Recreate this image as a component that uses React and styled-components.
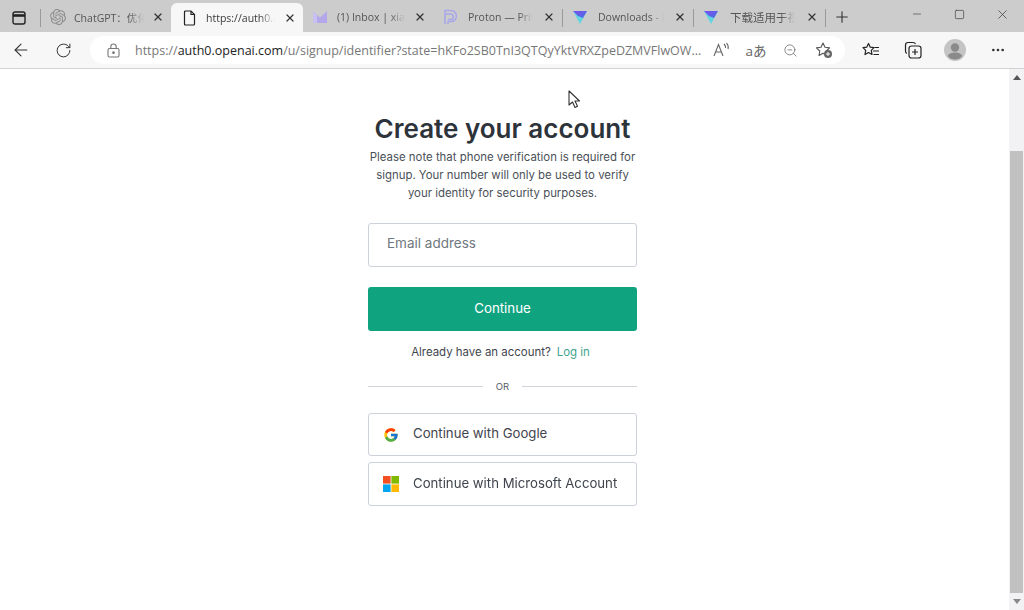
import React from 'react';
import styled, { createGlobalStyle } from 'styled-components';
import { ArrowLeft, RotateCw, ZoomOut, Plus, X, Minus, Square, MoreHorizontal } from 'lucide-react';
import { SiOpenai } from 'react-icons/si';
import { FcGoogle } from 'react-icons/fc';

const GlobalStyle = createGlobalStyle`
  html, body { margin: 0; padding: 0; background: #fff; overflow: hidden; }
  body { font-family: "Inter", "Liberation Sans", sans-serif; }
`;

const Shell = styled.div`
  position: relative;
  width: 1024px;
  height: 610px;
  display: flex;
  flex-direction: column;
  overflow: hidden;
  filter: blur(0.4px);
`;

const TabStrip = styled.div`
  height: 32px;
  background: #cccccc;
  display: flex;
  align-items: flex-end;
  flex-shrink: 0;
`;

const SidebarButton = styled.div`
  width: 40px;
  height: 32px;
  display: flex;
  align-items: center;
  justify-content: center;
  padding: 3px 3px 0 0;
  box-sizing: border-box;
  flex-shrink: 0;
`;

const Divider = styled.div`
  width: 1px;
  height: 18px;
  margin-bottom: 5px;
  background: #9a9a9a;
  flex-shrink: 0;
`;

const Tab = styled.div`
  width: ${p => p.$w}px;
  height: ${p => (p.$active ? 29 : 32)}px;
  flex-shrink: 0;
  display: flex;
  align-items: center;
  gap: ${p => p.$gap || 9}px;
  padding: ${p => (p.$active ? 0 : 2)}px 7px 0 ${p => p.$pad || 9}px;
  box-sizing: border-box;
  border-radius: 6px 6px 0 0;
  background: ${p => (p.$active ? '#f7f7f7' : 'transparent')};
`;

const TabTitle = styled.span`
  flex: 1;
  min-width: 0;
  white-space: nowrap;
  font-family: "Open Sans", "Noto Sans CJK SC", sans-serif;
  font-size: ${p => p.$size || 10.5}px;
  color: ${p => (p.$active ? '#3a3a3a' : '#555')};
  mask-image: linear-gradient(to right, #000 78%, transparent 100%);
  -webkit-mask-image: linear-gradient(to right, #000 78%, transparent 100%);
`;

const TabIcon = styled.span`
  width: 16px;
  height: 16px;
  display: flex;
  align-items: center;
  justify-content: center;
  flex-shrink: 0;
`;

const NewTab = styled.div`
  width: 31px;
  height: 32px;
  padding-top: 2px;
  box-sizing: border-box;
  display: flex;
  align-items: center;
  justify-content: center;
  flex-shrink: 0;
`;

const WindowButtons = styled.div`
  margin-left: auto;
  display: flex;
  align-items: flex-start;
  height: 32px;
`;

const WindowButton = styled.div`
  width: 43px;
  height: 28px;
  display: flex;
  align-items: center;
  justify-content: center;
`;

const Toolbar = styled.div`
  height: 37px;
  box-sizing: border-box;
  background: #f7f7f7;
  border-bottom: 1px solid #d2d2d2;
  display: flex;
  align-items: center;
  flex-shrink: 0;
`;

const ToolButton = styled.div`
  width: ${p => p.$w || 42}px;
  height: 30px;
  display: flex;
  align-items: center;
  justify-content: center;
  flex-shrink: 0;
`;

const AddressBar = styled.div`
  width: 755px;
  height: 28px;
  margin-left: 6px;
  border-radius: 14px;
  background: #fff;
  display: flex;
  align-items: center;
  padding-left: 17px;
  box-sizing: border-box;
  flex-shrink: 0;

  > svg {
    flex-shrink: 0;
  }
`;

const Url = styled.div`
  width: 566px;
  margin-left: 15px;
  overflow: hidden;
  white-space: nowrap;
  font-family: "Open Sans", sans-serif;
  font-size: 12.5px;
  color: #777;
  flex-shrink: 0;

  strong {
    font-weight: 400;
    color: #222;
  }
`;

const AddressActions = styled.div`
  display: flex;
  align-items: center;
  margin-left: 4px;
`;

const AddressAction = styled.div`
  width: 34px;
  height: 24px;
  display: flex;
  align-items: center;
  justify-content: center;
  font-family: "Open Sans", "Noto Sans CJK JP", sans-serif;
  font-size: 13.5px;
  color: #666;
`;

const ToolGroup = styled.div`
  display: flex;
  align-items: center;
  margin-left: 5px;
`;

const Page = styled.div`
  flex: 1;
  display: flex;
  min-height: 0;
`;

const Main = styled.main`
  flex: 1;
  background: #fff;
  display: flex;
  justify-content: flex-start;
  padding: 44px 0 0 368px;
  box-sizing: border-box;
`;

const Form = styled.div`
  width: 269px;
  display: flex;
  flex-direction: column;
  align-items: stretch;
`;

const Title = styled.h1`
  margin: 0;
  font-size: 26px;
  line-height: 32px;
  font-weight: 600;
  color: #2d333a;
  text-align: center;
  white-space: nowrap;
`;

const Note = styled.p`
  margin: 3px 0 0;
  font-size: 11.4px;
  line-height: 18px;
  color: #4a4f57;
  text-align: center;
`;

const EmailBox = styled.div`
  margin-top: 21px;
  height: 44px;
  box-sizing: border-box;
  border: 1px solid #ccd1da;
  border-radius: 3px;
  padding: 0 0 5px 18px;
  display: flex;
  align-items: center;
  font-size: 13.5px;
  color: #6f7780;
`;

const PrimaryButton = styled.div`
  margin-top: 20px;
  height: 44px;
  box-sizing: border-box;
  padding-bottom: 3px;
  border-radius: 3px;
  background: #10a37f;
  color: #fff;
  display: flex;
  align-items: center;
  justify-content: center;
  font-size: 13.3px;
`;

const LoginRow = styled.div`
  margin-top: 12px;
  height: 18px;
  padding-right: 4px;
  display: flex;
  justify-content: center;
  gap: 6px;
  font-size: 11.45px;
  line-height: 18px;
  color: #3f454d;
`;

const LoginLink = styled.span`
  color: #3fa58f;
`;

const OrRow = styled.div`
  margin-top: 16px;
  height: 18px;
  display: flex;
  align-items: center;
  gap: 13px;
  font-size: 9.5px;
  color: #555b63;

  &::before,
  &::after {
    content: '';
    flex: 1;
    height: 1px;
    background: #cfd3d9;
  }
`;

const SocialButton = styled.div`
  margin-top: ${p => p.$top}px;
  height: ${p => p.$h}px;
  box-sizing: border-box;
  border: 1px solid #ccd1da;
  border-radius: 3px;
  padding-left: 14px;
  display: flex;
  align-items: center;
  gap: 14px;
  font-size: 13.2px;
  color: #3f454d;
`;

const SocialLabel = styled.span`
  margin-top: -3px;
`;

const Scrollbar = styled.div`
  width: 15px;
  background: #f2f1f3;
  display: flex;
  flex-direction: column;
  align-items: center;
  flex-shrink: 0;
`;

const ScrollArrow = styled.div`
  height: 17px;
  display: flex;
  align-items: center;
  justify-content: center;
  flex-shrink: 0;
  width: 100%;
`;

const ScrollTrack = styled.div`
  flex: 1;
  width: 100%;
  padding-top: 65px;
  box-sizing: border-box;
  display: flex;
  justify-content: center;
`;

const ScrollThumb = styled.div`
  width: 13px;
  height: 442px;
  background: #c1c1c1;
`;

const Cursor = styled.svg`
  position: absolute;
  left: 567px;
  top: 90px;
`;

const CloseIcon = () => <X size={12} strokeWidth={2.4} color="#333" />;

const ProtonMailIcon = () => (
  <svg width="16" height="14" viewBox="0 0 16 14">
    <path d="M1 1.5 L8 7.5 L15 1 V13 H3 Q1 13 1 11 Z" fill="#b5a8ea" />
    <path d="M1 1.5 L5 5 V13 H3 Q1 13 1 11 Z" fill="#c9c0f2" />
  </svg>
);

const ProtonIcon = () => (
  <svg width="14" height="16" viewBox="0 0 14 16">
    <path d="M2 15 V5 H8 A2.8 2.8 0 0 1 8 10.5 H5 M2 4 V1.5 H8 A5.2 5.2 0 0 1 8 12.5 H5 V15" fill="none" stroke="#a9a8e8" strokeWidth="1.6" />
  </svg>
);

const VpnIcon = ({ id }) => (
  <svg width="16" height="15" viewBox="0 0 16 15">
    <defs>
      <linearGradient id={id} x1="0" y1="0" x2="1" y2="1">
        <stop offset="0" stopColor="#7a4ff0" />
        <stop offset="1" stopColor="#4a6fe0" />
      </linearGradient>
    </defs>
    <path d="M1 1 H15 L8 14 Z" fill="#62d5e0" />
    <path d="M1 1 H15 L11 8 L6 6 Z" fill={`url(#${id})`} />
  </svg>
);

const SidebarIcon = () => (
  <svg width="14" height="14" viewBox="0 0 14 14" fill="none">
    <rect x="1" y="1" width="12" height="12" rx="2" stroke="#222" strokeWidth="1.4" />
    <path d="M1 4.5 H13" stroke="#222" strokeWidth="2.6" />
  </svg>
);

const PageIcon = () => (
  <svg width="13" height="16" viewBox="0 0 13 16" fill="none" stroke="#222" strokeWidth="1.2">
    <path d="M1.5 2 Q1.5 1 2.5 1 H8 L11.5 4.5 V14 Q11.5 15 10.5 15 H2.5 Q1.5 15 1.5 14 Z" />
    <path d="M8 1 V4.5 H11.5" />
  </svg>
);

const LockIcon = () => (
  <svg width="13" height="15" viewBox="0 0 13 15" fill="none" stroke="#777" strokeWidth="1.1">
    <rect x="1" y="5.5" width="11" height="8.5" rx="1.5" />
    <path d="M3.8 5.5 V3.7 A2.7 2.7 0 0 1 9.2 3.7 V5.5" />
    <circle cx="6.5" cy="9.7" r="0.8" fill="#777" />
  </svg>
);

const ReadAloudIcon = () => (
  <svg width="18" height="16" viewBox="0 0 18 16" fill="none" stroke="#666" strokeWidth="1.1">
    <path d="M1 14 L5.5 2.5 L10 14 M2.7 10 H8.3" />
    <path d="M11 2 Q13 4 12.5 6 M13.5 1 Q16 4 15 7" />
  </svg>
);

const StarAddIcon = () => (
  <svg width="18" height="18" viewBox="0 0 18 18" fill="none">
    <path d="M8 2 L10 6.3 L14.6 6.9 L11.2 10 L12 14.5 L8 12.3 L4 14.5 L4.8 10 L1.4 6.9 L6 6.3 Z" stroke="#555" strokeWidth="1.1" strokeLinejoin="round" />
    <circle cx="13" cy="13" r="4" fill="#666" />
    <path d="M13 11 V15 M11 13 H15" stroke="#fff" strokeWidth="1" />
  </svg>
);

const FavoritesIcon = () => (
  <svg width="18" height="16" viewBox="0 0 18 16" fill="none" stroke="#222" strokeWidth="1.2" strokeLinejoin="round">
    <path d="M6.5 1.5 L8.3 5.2 L12 5.7 L9.3 8.4 L10 12.5 L6.5 10.5 L3 12.5 L3.7 8.4 L1 5.7 L4.7 5.2 Z" />
    <path d="M12.5 5.5 H17 M11 9 H17 M11.5 12.5 H17" />
  </svg>
);

const CollectionsIcon = () => (
  <svg width="18" height="18" viewBox="0 0 18 18" fill="none" stroke="#222" strokeWidth="1.2">
    <path d="M3 12.5 Q1.5 12 1.5 10 V4 Q1.5 1.5 4 1.5 H9 Q11 1.5 11.5 3" />
    <rect x="5" y="5" width="12" height="12" rx="2.5" />
    <path d="M11 8 V14 M8 11 H14" />
  </svg>
);

const AvatarIcon = () => (
  <svg width="22" height="22" viewBox="0 0 22 22">
    <circle cx="11" cy="11" r="11" fill="#c4c4c4" />
    <circle cx="11" cy="8.5" r="4.2" fill="#8a8a8a" />
    <path d="M3.8 17 Q5 13.5 11 13.5 Q17 13.5 18.2 17 Q15.5 20.5 11 20.5 Q6.5 20.5 3.8 17 Z" fill="#8a8a8a" />
  </svg>
);

const MicrosoftIcon = () => (
  <svg width="16" height="16" viewBox="0 0 16 16">
    <rect width="7.6" height="7.6" fill="#f25022" />
    <rect x="8.4" width="7.6" height="7.6" fill="#7fba00" />
    <rect y="8.4" width="7.6" height="7.6" fill="#00a4ef" />
    <rect x="8.4" y="8.4" width="7.6" height="7.6" fill="#ffb900" />
  </svg>
);

const tabs = [
  { w: 130, title: 'ChatGPT：优化', icon: <SiOpenai size={16} color="#8d8d8d" />, gap: 8 },
  { w: 132, title: 'https://auth0.o', icon: <PageIcon />, active: true, gap: 9, pad: 10 },
  { w: 130, title: '(1) Inbox | xiao', icon: <ProtonMailIcon />, gap: 9 },
  { w: 129, title: 'Proton — Priv', icon: <ProtonIcon />, gap: 10, sep: true },
  { w: 130, title: 'Downloads - P', icon: <VpnIcon id="vpnA" />, gap: 10, sep: true },
  { w: 131, title: '下载适用于视', icon: <VpnIcon id="vpnB" />, gap: 11, sep: true, size: 11.5 },
];

const App = () => (
  <Shell>
    <GlobalStyle />
    <TabStrip>
      <SidebarButton>
        <SidebarIcon />
      </SidebarButton>
      <Divider />
      {tabs.map((tab) => (
        <React.Fragment key={tab.title}>
          <Tab $w={tab.w} $active={tab.active} $gap={tab.gap} $pad={tab.pad}>
            <TabIcon>{tab.icon}</TabIcon>
            <TabTitle $active={tab.active} $size={tab.size}>{tab.title}</TabTitle>
            <CloseIcon />
          </Tab>
          {tab.sep && <Divider />}
        </React.Fragment>
      ))}
      <NewTab>
        <Plus size={18} strokeWidth={1.5} color="#333" />
      </NewTab>
      <WindowButtons>
        <WindowButton>
          <Minus size={12} strokeWidth={1.2} color="#333" />
        </WindowButton>
        <WindowButton>
          <Square size={11} strokeWidth={1.4} color="#333" />
        </WindowButton>
        <WindowButton>
          <X size={15} strokeWidth={1.1} color="#333" />
        </WindowButton>
      </WindowButtons>
    </TabStrip>
    <Toolbar>
      <ToolButton>
        <ArrowLeft size={20} strokeWidth={1.3} color="#333" />
      </ToolButton>
      <ToolButton>
        <RotateCw size={17} strokeWidth={1.4} color="#333" />
      </ToolButton>
      <AddressBar>
        <LockIcon />
        <Url>
          https://<strong>auth0.openai.com</strong>/u/signup/identifier?state=hKFo2SB0TnI3QTQyYktVRXZpeDZMVFlwOW...
        </Url>
        <AddressActions>
          <AddressAction><ReadAloudIcon /></AddressAction>
          <AddressAction>aあ</AddressAction>
          <AddressAction><ZoomOut size={15} strokeWidth={1.2} color="#666" /></AddressAction>
          <AddressAction><StarAddIcon /></AddressAction>
        </AddressActions>
      </AddressBar>
      <ToolGroup>
        <ToolButton><FavoritesIcon /></ToolButton>
        <ToolButton><CollectionsIcon /></ToolButton>
        <ToolButton><AvatarIcon /></ToolButton>
        <ToolButton $w={44}><MoreHorizontal size={16} strokeWidth={2} color="#333" /></ToolButton>
      </ToolGroup>
    </Toolbar>
    <Page>
      <Main>
        <Form>
          <Title>Create your account</Title>
          <Note>
            Please note that phone verification is required for signup. Your number will only be used to verify your identity for security purposes.
          </Note>
          <EmailBox>Email address</EmailBox>
          <PrimaryButton>Continue</PrimaryButton>
          <LoginRow>
            Already have an account?
            <LoginLink>Log in</LoginLink>
          </LoginRow>
          <OrRow>OR</OrRow>
          <SocialButton $top={18} $h={43}>
            <FcGoogle size={16} />
            <SocialLabel>Continue with Google</SocialLabel>
          </SocialButton>
          <SocialButton $top={6} $h={44}>
            <MicrosoftIcon />
            <SocialLabel>Continue with Microsoft Account</SocialLabel>
          </SocialButton>
        </Form>
      </Main>
      <Scrollbar>
        <ScrollArrow>
          <svg width="8" height="5" viewBox="0 0 8 5"><path d="M0 5 L4 0 L8 5 Z" fill="#555" /></svg>
        </ScrollArrow>
        <ScrollTrack>
          <ScrollThumb />
        </ScrollTrack>
        <ScrollArrow>
          <svg width="8" height="5" viewBox="0 0 8 5"><path d="M0 0 L4 5 L8 0 Z" fill="#888" /></svg>
        </ScrollArrow>
      </Scrollbar>
    </Page>
    <Cursor width="16" height="20" viewBox="0 0 16 20">
      <path d="M2 1 V15 L5.5 12 L8 17.5 L10.5 16.3 L8 11 H12.5 Z" fill="#fff" stroke="#333" strokeWidth="1.1" strokeLinejoin="round" />
    </Cursor>
  </Shell>
);

export default App;
